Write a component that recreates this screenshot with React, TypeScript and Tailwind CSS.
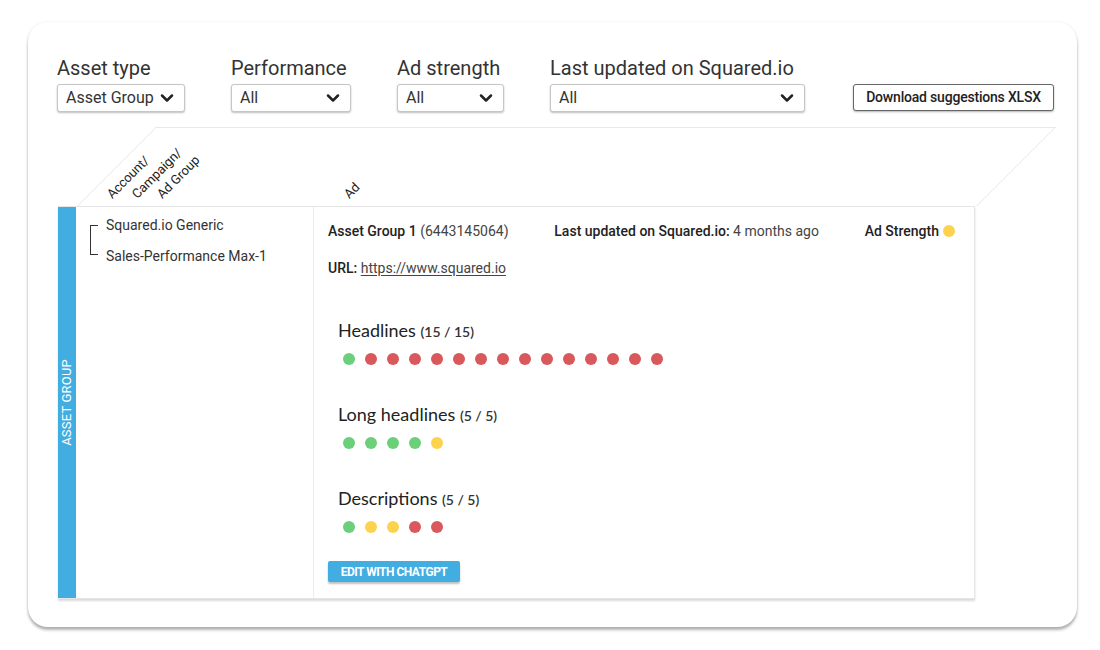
import { ChevronDown } from "lucide-react"

const GREEN = "bg-[#6ccf7a]"
const RED = "bg-[#d8585b]"
const YELLOW = "bg-[#fdd34d]"

const filters = [
  { label: "Asset type", value: "Asset Group", width: "w-[128px]" },
  { label: "Performance", value: "All", width: "w-[120px]" },
  { label: "Ad strength", value: "All", width: "w-[107px]" },
  { label: "Last updated on Squared.io", value: "All", width: "w-[255px]" },
]

const sections = [
  {
    title: "Headlines",
    count: "(15 / 15)",
    dots: [GREEN, RED, RED, RED, RED, RED, RED, RED, RED, RED, RED, RED, RED, RED, RED],
  },
  { title: "Long headlines", count: "(5 / 5)", dots: [GREEN, GREEN, GREEN, GREEN, YELLOW] },
  { title: "Descriptions", count: "(5 / 5)", dots: [GREEN, YELLOW, YELLOW, RED, RED] },
]

function Dropdown({ value, width }: { value: string; width: string }) {
  return (
    <div
      className={`${width} h-[28px] flex items-center justify-between pl-[8px] pr-[7px] bg-white border border-[#c6c6c6] rounded-[3px] shadow-[0_1px_2px_rgba(0,0,0,0.25)] text-[16px] text-[#333]`}
    >
      <span>{value}</span>
      <ChevronDown size={20} strokeWidth={3} className="text-[#222]" />
    </div>
  )
}

function RotLabel({ text }: { text: string }) {
  return (
    <div className="w-[25px] h-[16px] shrink-0">
      <div className="whitespace-nowrap text-[13px] leading-[16px] text-[#222] origin-bottom-left -rotate-45">
        {text}
      </div>
    </div>
  )
}

export default function App() {
  return (
    <div className="min-h-[650px] w-[1100px] bg-white pt-[22px] pl-[28px] font-['Roboto',sans-serif]">
      <div className="w-[1049px] h-[605px] rounded-[20px] bg-white shadow-[0_0_3px_rgba(0,0,0,0.08),0_3px_3px_rgba(0,0,0,0.3)] pt-[34px] pl-[29px]">
        {/* filters */}
        <div className="flex items-end gap-[46px]">
          {filters.map((f) => (
            <div key={f.label} className="flex flex-col">
              <div className="text-[20px] leading-[24px] text-[#333] mb-[4px] whitespace-nowrap">{f.label}</div>
              <Dropdown value={f.value} width={f.width} />
            </div>
          ))}
          <button className="ml-[2px] w-[201px] h-[27px] mb-px bg-white border border-[#666] rounded-[3px] shadow-[0_1px_2px_rgba(0,0,0,0.3)] text-[14px] font-medium text-[#222] tracking-[-0.2px]">
            Download suggestions XLSX
          </button>
        </div>

        {/* table */}
        <div className="mt-[15px] ml-px w-[917px]">
          <div className="ml-[19px] w-[900px] h-[79px] relative flex items-end pb-[4px] before:absolute before:inset-0 before:border before:border-b-0 before:border-[#e6e8ee] before:origin-bottom before:-skew-x-45">
            <div className="w-[237px] pl-[38px] flex">
              <RotLabel text="Account/" />
              <RotLabel text="Campaign/" />
              <RotLabel text="Ad Group" />
            </div>
            <div className="pl-[38px] flex">
              <RotLabel text="Ad" />
            </div>
          </div>

          <div className="h-[393px] flex border border-[#e6e6e6] border-l-0 shadow-[0_2px_2px_rgba(0,0,0,0.15)]">
            <div className="w-[18px] bg-[#42ade1] flex items-center justify-center">
              <span className="[writing-mode:vertical-rl] rotate-180 text-[13px] text-white tracking-[0.2px] whitespace-nowrap">
                ASSET GROUP
              </span>
            </div>

            <div className="w-[238px] border-r border-[#ececec] pl-[14px] pt-[8px] text-[14px] text-[#333]">
              <div className="flex">
                <div className="mt-[10px] w-[8px] h-[30px] border-l border-t border-b border-[#333]" />
                <div className="ml-[8px] flex flex-col gap-[11px] leading-[20px]">
                  <span>Squared.io Generic</span>
                  <span>Sales-Performance Max-1</span>
                </div>
              </div>
            </div>

            <div className="flex-1 pl-[14px] pr-[19px] pt-[14px] text-[14px] leading-[20px] text-[#444]">
              <div className="flex justify-between items-center">
                <div>
                  <span className="font-medium text-[#222]">Asset Group 1</span> (6443145064)
                </div>
                <div>
                  <span className="font-medium text-[#222]">Last updated on Squared.io:</span> 4 months ago
                </div>
                <div className="flex items-center gap-[4px]">
                  <span className="font-medium text-[#222]">Ad Strength</span>
                  <span className={`w-[12px] h-[12px] rounded-full ${YELLOW}`} />
                </div>
              </div>

              <div className="mt-[17px]">
                <span className="font-medium text-[#222]">URL:</span>{" "}
                <span className="underline underline-offset-2">https://www.squared.io</span>
              </div>

              <div className="pl-[10px] mt-[40px] flex flex-col gap-[37px] font-['Lato',sans-serif]">
                {sections.map((s) => (
                  <div key={s.title}>
                    <div className="text-[18px] leading-[24px] text-[#222]">
                      {s.title} <span className="text-[14px] font-semibold text-[#333]">{s.count}</span>
                    </div>
                    <div className="mt-[9px] pl-[5px] flex gap-[10px]">
                      {s.dots.map((d, i) => (
                        <span key={i} className={`w-[12px] h-[12px] rounded-full ${d}`} />
                      ))}
                    </div>
                  </div>
                ))}
              </div>

              <button className="mt-[28px] w-[132px] h-[21px] rounded-[2px] bg-[#42ade1] shadow-[0_2px_2px_rgba(0,0,0,0.25)] text-white text-[12px] font-bold tracking-[-0.5px]">
                EDIT WITH CHATGPT
              </button>
            </div>
          </div>
        </div>
      </div>
    </div>
  )
}
